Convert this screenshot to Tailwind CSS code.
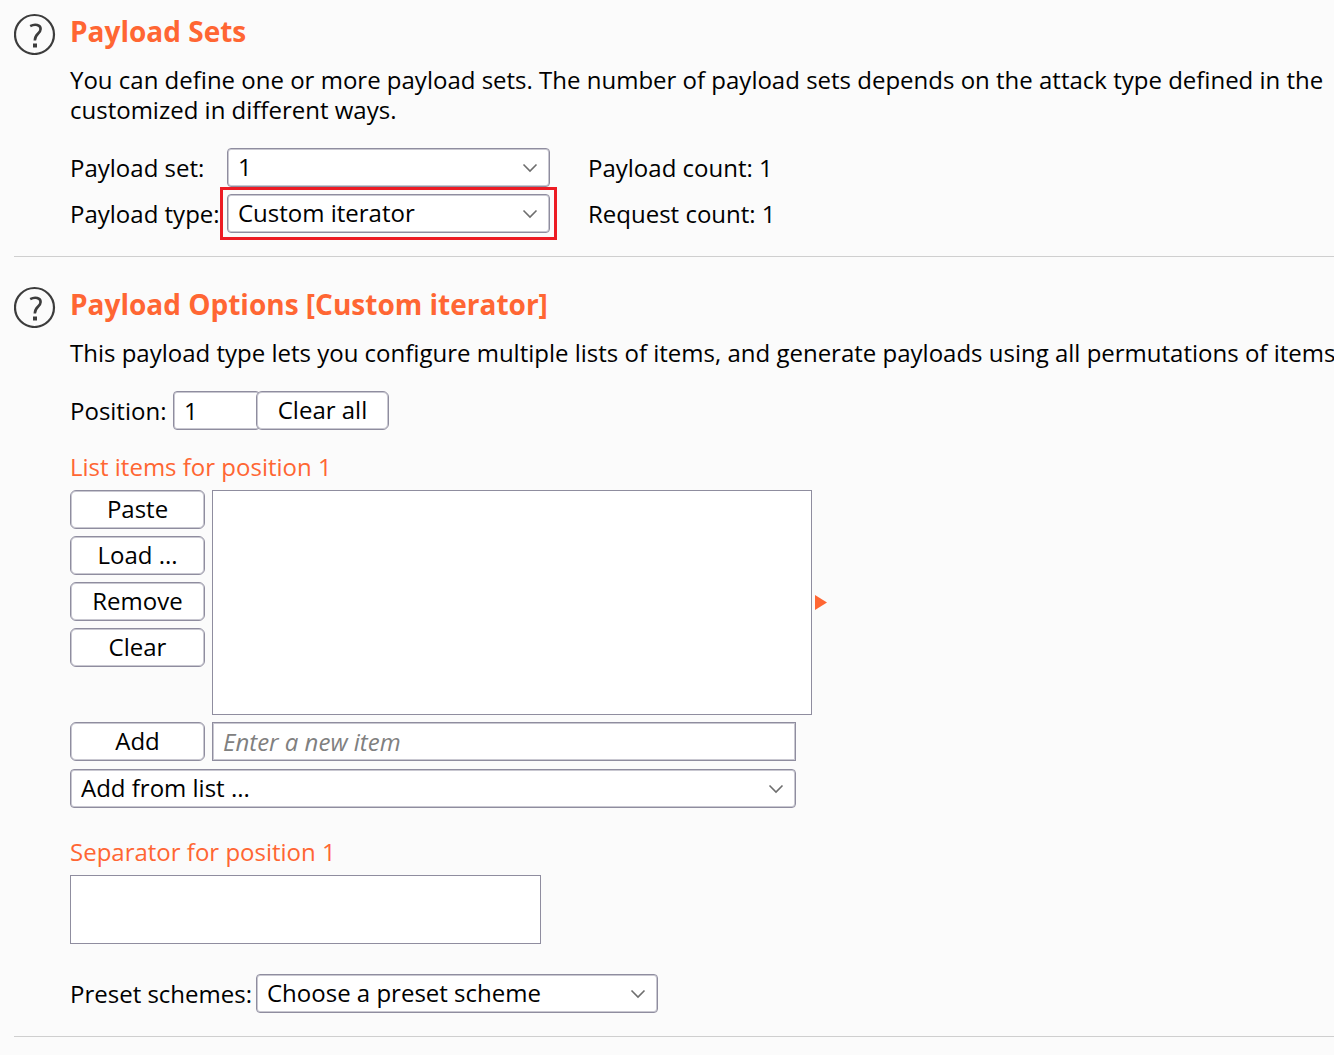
<!DOCTYPE html>
<html lang="en">
	<head>
		<meta charset="UTF-8" />
		<meta name="viewport" content="width=device-width, initial-scale=1.0" />
		<title>Payloads</title>
		<script src="https://cdn.jsdelivr.net/npm/@tailwindcss/browser@4"></script>
	</head>
	<body
		class="bg-[#fbfbfb] text-black font-['Open_Sans','Noto_Sans',sans-serif] text-[24px] leading-[30px] overflow-x-hidden"
	>
		<!-- Payload Sets -->
		<section class="flex gap-[14px] ml-[14px] pt-[13px] pb-[23px] border-b border-[#cfcfcf]">
			<button class="h-[42px] w-[42px] shrink-0" aria-label="Help">
				<svg viewBox="0 0 42 42" fill="none" stroke="#3c3c3c">
					<circle cx="20.5" cy="21.5" r="19.5" stroke-width="2.2" />
					<path d="M16.2 13.2C21 10.6 26.6 11.8 26.6 16C26.6 20.6 20.8 20.6 20.8 27.5" stroke-width="2.6" />
					<path d="M19 30.5h4v4h-4z" fill="#3c3c3c" stroke="none" />
				</svg>
			</button>
			<div class="min-w-0">
				<h2 class="mt-[2px] text-[28px] leading-8 font-bold text-[#ff6633]">Payload Sets</h2>
				<p class="mt-[18px] whitespace-nowrap">
					You can define one or more payload sets. The number of payload sets depends on the attack type defined in the<br />
					customized in different ways.
				</p>
				<div class="mt-[23px] grid grid-cols-[157px_323px_auto] gap-y-[7px] items-center whitespace-nowrap">
					<label for="payloadSet">Payload set:</label>
					<div class="relative">
						<select id="payloadSet" class="block appearance-none w-full h-[39px] px-[10px] pb-px bg-white border border-[#8f8d9f] inset-ring inset-ring-[#c9c8d1] rounded-sm">
							<option>1</option>
						</select>
						<svg class="absolute right-3 top-3 w-4 h-4 pointer-events-none" viewBox="0 0 16 16" fill="none" stroke="#6e6e6e" stroke-width="1.6">
							<path d="M1.5 4.5L8 11L14.5 4.5" />
						</svg>
					</div>
					<p class="pl-[38px]">Payload count: 1</p>

					<label for="payloadType">Payload type:</label>
					<div class="relative outline-3 outline-offset-4 outline-[#ed1c24]">
						<select id="payloadType" class="block appearance-none w-full h-[39px] px-[10px] pb-px bg-white border border-[#8f8d9f] inset-ring inset-ring-[#c9c8d1] rounded-sm">
							<option>Custom iterator</option>
						</select>
						<svg class="absolute right-3 top-3 w-4 h-4 pointer-events-none" viewBox="0 0 16 16" fill="none" stroke="#6e6e6e" stroke-width="1.6">
							<path d="M1.5 4.5L8 11L14.5 4.5" />
						</svg>
					</div>
					<p class="pl-[38px]">Request count: 1</p>
				</div>
			</div>
		</section>

		<!-- Payload Options -->
		<section class="flex gap-[14px] ml-[14px] pt-[29px] pb-[23px] border-b border-[#cfcfcf]">
			<button class="h-[42px] w-[42px] shrink-0" aria-label="Help">
				<svg viewBox="0 0 42 42" fill="none" stroke="#3c3c3c">
					<circle cx="20.5" cy="21.5" r="19.5" stroke-width="2.2" />
					<path d="M16.2 13.2C21 10.6 26.6 11.8 26.6 16C26.6 20.6 20.8 20.6 20.8 27.5" stroke-width="2.6" />
					<path d="M19 30.5h4v4h-4z" fill="#3c3c3c" stroke="none" />
				</svg>
			</button>
			<div class="min-w-0">
				<h2 class="mt-[2px] text-[28px] leading-8 font-bold text-[#ff6633]">Payload Options [Custom iterator]</h2>
				<p class="mt-[18px] whitespace-nowrap">
					This payload type lets you configure multiple lists of items, and generate payloads using all permutations of items
				</p>

				<div class="mt-[23px] flex items-center">
					<label for="position" class="w-[103px]">Position:</label>
					<input id="position" type="text" value="1" class="w-[87px] h-[39px] px-[10px] pb-px bg-white border border-[#8f8d9f] inset-ring inset-ring-[#c9c8d1] rounded-sm" />
					<button class="-ml-1 w-[133px] h-[39px] pb-px bg-white border border-[#8f8d9f] inset-ring inset-ring-[#c9c8d1] rounded-md">Clear all</button>
				</div>

				<label for="listItems" class="block mt-[22px] text-[#ff6633]">List items for position 1</label>
				<div class="mt-2 flex">
					<div class="flex flex-col gap-[7px] w-[135px] mr-[7px]">
						<button class="h-[39px] pb-px bg-white border border-[#8f8d9f] inset-ring inset-ring-[#c9c8d1] rounded-md">Paste</button>
						<button class="h-[39px] pb-px bg-white border border-[#8f8d9f] inset-ring inset-ring-[#c9c8d1] rounded-md">Load ...</button>
						<button class="h-[39px] pb-px bg-white border border-[#8f8d9f] inset-ring inset-ring-[#c9c8d1] rounded-md">Remove</button>
						<button class="h-[39px] pb-px bg-white border border-[#8f8d9f] inset-ring inset-ring-[#c9c8d1] rounded-md">Clear</button>
					</div>
					<select id="listItems" size="6" class="w-[600px] h-[225px] bg-white border border-[#8f8d9f]"></select>
					<svg class="self-center ml-[3px] w-3 h-[15px]" viewBox="0 0 12 15" fill="#ff6633">
						<path d="M0 0L12 7.5L0 15z" />
					</svg>
				</div>

				<div class="mt-[7px] flex gap-[7px] w-[726px]">
					<button class="w-[135px] h-[39px] pb-px bg-white border border-[#8f8d9f] inset-ring inset-ring-[#c9c8d1] rounded-md">Add</button>
					<input type="text" aria-label="New item" placeholder="Enter a new item" class="flex-1 h-[39px] px-[10px] pb-px bg-white border border-[#8f8d9f] inset-ring inset-ring-[#c9c8d1] placeholder:italic placeholder:text-[#808080]" />
				</div>
				<div class="relative mt-2 w-[726px]">
					<select aria-label="Add from list" class="block appearance-none w-full h-[39px] px-[10px] pb-px bg-white border border-[#8f8d9f] inset-ring inset-ring-[#c9c8d1] rounded-sm">
						<option>Add from list ...</option>
					</select>
					<svg class="absolute right-3 top-3 w-4 h-4 pointer-events-none" viewBox="0 0 16 16" fill="none" stroke="#6e6e6e" stroke-width="1.6">
						<path d="M1.5 4.5L8 11L14.5 4.5" />
					</svg>
				</div>

				<label for="separator" class="block mt-[29px] text-[#ff6633]">Separator for position 1</label>
				<textarea id="separator" class="block mt-2 w-[471px] h-[69px] px-[10px] bg-white border border-[#8f8d9f] resize-none"></textarea>

				<div class="mt-[30px] flex items-center">
					<label for="preset" class="w-[186px] whitespace-nowrap">Preset schemes:</label>
					<div class="relative w-[402px]">
						<select id="preset" class="block appearance-none w-full h-[39px] px-[10px] pb-px bg-white border border-[#8f8d9f] inset-ring inset-ring-[#c9c8d1] rounded-sm">
							<option>Choose a preset scheme</option>
						</select>
						<svg class="absolute right-3 top-3 w-4 h-4 pointer-events-none" viewBox="0 0 16 16" fill="none" stroke="#6e6e6e" stroke-width="1.6">
							<path d="M1.5 4.5L8 11L14.5 4.5" />
						</svg>
					</div>
				</div>
			</div>
		</section>
	</body>
</html>
